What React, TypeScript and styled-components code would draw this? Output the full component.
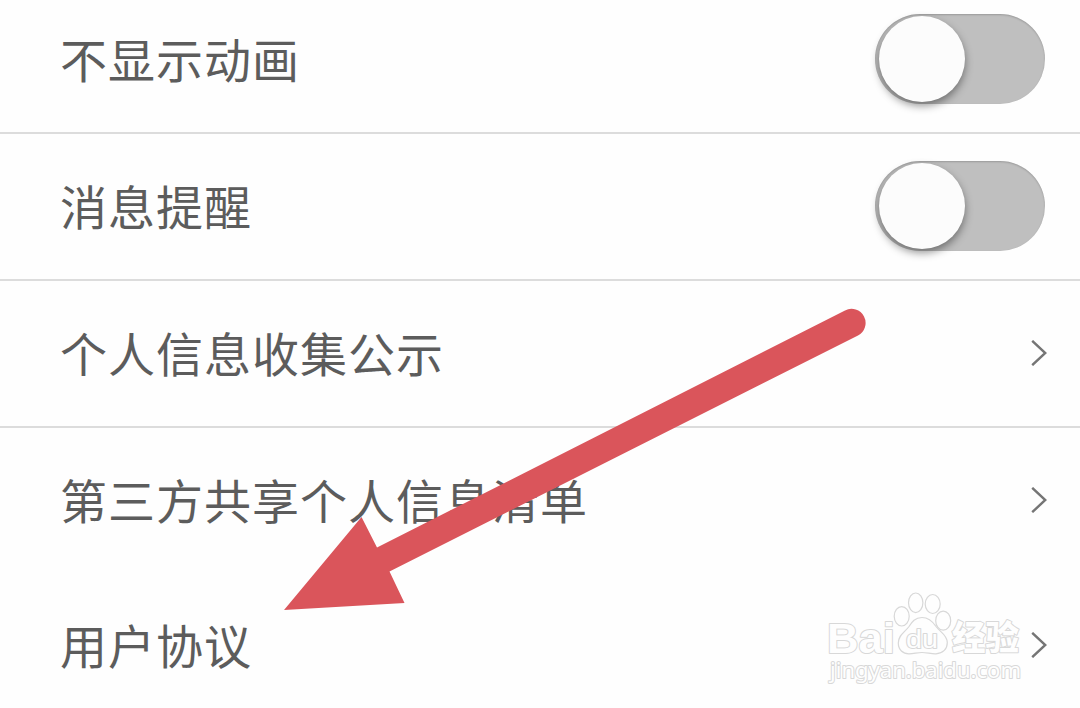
import React from 'react';
import styled, { createGlobalStyle } from 'styled-components';

const GlobalStyle = createGlobalStyle`
  body {
    margin: 0;
    background: #fefefe;
    overflow: hidden;
  }
`;

const Page = styled.main`
  position: relative;
  width: 1080px;
  height: 708px;
  overflow: hidden;
  background: #fefefe;
  font-family: 'Noto Sans CJK SC', sans-serif;
`;

const SettingsList = styled.div`
  display: flex;
  flex-direction: column;
  margin-top: -13px;
`;

const Row = styled.div<{ $divider: boolean }>`
  display: flex;
  align-items: center;
  justify-content: space-between;
  box-sizing: border-box;
  height: ${({ $divider }) => ($divider ? 147 : 145)}px;
  padding: 0 33px 0 60px;
  border-bottom: ${({ $divider }) => ($divider ? '2px solid #dcdcdc' : 'none')};
`;

const Label = styled.span`
  padding-bottom: 3px;
  color: #5c5c5c;
  font-size: 47px;
  line-height: 60px;
  letter-spacing: 1px;
  white-space: nowrap;
`;

const Switch = styled.button`
  display: flex;
  align-items: center;
  box-sizing: border-box;
  width: 170px;
  height: 90px;
  margin: 0 2px 2px 0;
  padding: 0 0 0 4px;
  border: 0;
  border-radius: 45px;
  background: #bfbfbf;
  box-shadow: inset 0 1px 2px rgba(0, 0, 0, 0.2);
`;

const Knob = styled.span`
  width: 86px;
  height: 86px;
  border-radius: 50%;
  background: #fcfcfc;
  box-shadow: 0 4px 9px rgba(0, 0, 0, 0.42);
`;

const Chevron = styled.svg`
  width: 16px;
  height: 26px;
  margin-bottom: 1px;
  fill: none;
  stroke: #757575;
  stroke-width: 2.4;
`;

const Arrow = styled.svg`
  position: absolute;
  top: 0;
  left: 0;
  pointer-events: none;
`;

const Watermark = styled.svg`
  position: absolute;
  top: 588px;
  left: 822px;
  fill: #fefefe;
  stroke: #d8d8d8;
  stroke-width: 1.2;
  pointer-events: none;

  text {
    paint-order: stroke;
    stroke-width: 2;
    stroke-linejoin: round;
  }
`;

interface Setting {
  label: string;
  type: 'switch' | 'link';
  divider: boolean;
}

const settings: Setting[] = [
  { label: '不显示动画', type: 'switch', divider: true },
  { label: '消息提醒', type: 'switch', divider: true },
  { label: '个人信息收集公示', type: 'link', divider: true },
  { label: '第三方共享个人信息清单', type: 'link', divider: false },
  { label: '用户协议', type: 'link', divider: false },
];

const SettingRow: React.FC<Setting> = ({ label, type, divider }) => {
  return (
    <Row $divider={divider}>
      <Label>{label}</Label>
      {type === 'switch' ? (
        <Switch type="button" role="switch" aria-checked={false}>
          <Knob />
        </Switch>
      ) : (
        <Chevron viewBox="0 0 16 26">
          <path d="M1.2 0.8 L14.3 13 L1.2 25.2" />
        </Chevron>
      )}
    </Row>
  );
};

const BaiduMark: React.FC = () => {
  return (
    <Watermark width="204" height="104" viewBox="0 0 204 104">
      <text
        x="5"
        y="65"
        fontSize="43"
        fontWeight="700"
        fontFamily="Liberation Sans"
        textLength="68"
        lengthAdjust="spacingAndGlyphs"
      >
        Bai
      </text>
      <ellipse cx="79.7" cy="28.3" rx="7.5" ry="9.7" />
      <ellipse cx="93.7" cy="14.8" rx="7.2" ry="9.8" />
      <ellipse cx="110.7" cy="16" rx="7.5" ry="9.5" />
      <ellipse cx="121.2" cy="32.7" rx="7.5" ry="9.5" />
      <path d="M100 29.5 C93 29.5 90 34 87 38.5 C83 44 76.3 47 76.3 55 C76.3 62 81 65.8 87 65.8 C92 65.8 95 64.5 100 64.5 C105 64.5 109 66 114 65.8 C121 65.4 125.3 61 125.3 54.5 C125.3 47 118 44 114 38.5 C111 34 107 29.5 100 29.5 Z" />
      <text
        x="84"
        y="60"
        fontSize="25"
        fontFamily="Liberation Sans"
        textLength="32"
        lengthAdjust="spacingAndGlyphs"
      >
        du
      </text>
      <text
        x="130"
        y="62"
        fontSize="34"
        fontWeight="900"
        fontFamily="Noto Sans CJK SC"
        textLength="67"
        lengthAdjust="spacingAndGlyphs"
      >
        经验
      </text>
      <text
        x="8"
        y="90"
        fontSize="22"
        fontFamily="Noto Sans"
        textLength="191"
        lengthAdjust="spacingAndGlyphs"
      >
        jingyan.baidu.com
      </text>
    </Watermark>
  );
};

const App: React.FC = () => {
  return (
    <>
      <GlobalStyle />
      <Page>
        <SettingsList>
          {settings.map((setting) => (
            <SettingRow key={setting.label} {...setting} />
          ))}
        </SettingsList>
        <BaiduMark />
        <Arrow width="1080" height="708" viewBox="0 0 1080 708">
          <path
            d="M284 610 L361.5 517 L377 547.5 L845 310.5 A13.8 13.8 0 0 1 858 335.5 L389.5 571.5 L404.5 603 Z"
            fill="#da555b"
          />
        </Arrow>
      </Page>
    </>
  );
};

export default App;
